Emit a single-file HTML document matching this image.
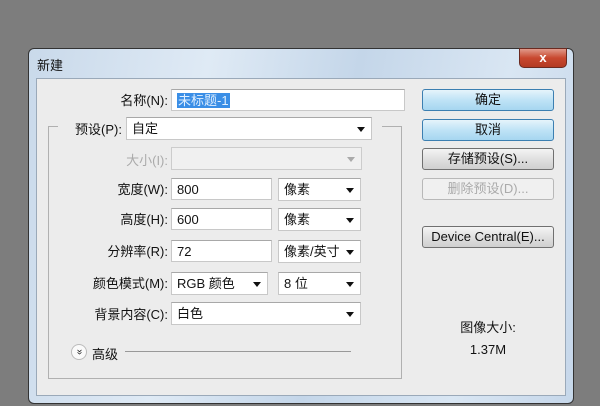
<!DOCTYPE html><html><head><meta charset="utf-8"><style>
*{margin:0;padding:0;box-sizing:border-box}
body{width:600px;height:406px;background:#7d7d7d;position:relative;overflow:hidden;font-family:"Liberation Sans","Noto Sans CJK SC",sans-serif;font-size:13px;color:#111}
.a{position:absolute}
.dlg{left:28px;top:48px;width:546px;height:356px;border-radius:6px;border:1px solid #333;background:linear-gradient(100deg,#c9d9ea 0%,#dfeaf5 30%,#c4d6e9 55%,#d9e6f3 80%,#c6d7ea 100%)}
.panel{left:36px;top:78px;width:530px;height:318px;background:#ececec;border:1px solid #9aa9b9}
.inp{background:#fff;border:1px solid #c8c8c8;border-top-color:#a8a8a8;padding-left:5px;line-height:21px}
.lbl{text-align:right;line-height:21px}
.arr{position:absolute;right:6px;top:9px;width:0;height:0;border-left:4px solid transparent;border-right:4px solid transparent;border-top:5px solid #111}
.btn{left:422px;width:132px;height:22px;border:1px solid #707070;border-radius:3px;background:linear-gradient(#f4f4f4,#e0e0e0 50%,#cfcfcf);text-align:center;line-height:20px}
.bl{border-color:#3c7fb1;background:linear-gradient(#e6f4fb,#bfe3f6 50%,#a6d6f0)}
</style></head><body>
<div class="a dlg"></div>
<div class="a" style="left:37px;top:55px;font-size:13px">新建</div>
<div class="a" style="left:519px;top:48px;width:48px;height:20px;border-radius:0 0 5px 5px;background:linear-gradient(#e09a8a,#c8482f 50%,#b33a22);border:1px solid #6b2a20;color:#fff;text-align:center;font-weight:bold;line-height:18px;font-size:13px">x</div>
<div class="a panel"></div>
<div class="a" style="left:48px;top:126px;width:354px;height:253px;border:1px solid #b0b0b0;border-top:none"></div>
<div class="a" style="left:48px;top:126px;width:10px;border-top:1px solid #b0b0b0"></div>
<div class="a" style="left:382px;top:126px;width:20px;border-top:1px solid #b0b0b0"></div>

<div class="a lbl" style="left:80px;top:90px;width:88px">名称(N):</div>
<div class="a inp" style="left:171px;top:89px;width:234px;height:22px"><span style="background:#3a8ee6;color:#dfefff;padding:0 1px">未标题-1</span></div>

<div class="a lbl" style="left:60px;top:119px;width:62px">预设(P):</div>
<div class="a inp" style="left:126px;top:117px;width:246px;height:23px">自定<i class="arr"></i></div>

<div class="a lbl" style="left:80px;top:150px;width:88px;color:#aaa">大小(I):</div>
<div class="a inp" style="left:171px;top:147px;width:191px;height:23px;background:#f0f0f0;border-color:#ccc"><i class="arr" style="border-top-color:#aaa"></i></div>

<div class="a lbl" style="left:80px;top:179px;width:88px">宽度(W):</div>
<div class="a inp" style="left:171px;top:178px;width:101px;height:22px">800</div>
<div class="a inp" style="left:278px;top:178px;width:83px;height:23px">像素<i class="arr"></i></div>

<div class="a lbl" style="left:80px;top:209px;width:88px">高度(H):</div>
<div class="a inp" style="left:171px;top:208px;width:101px;height:22px">600</div>
<div class="a inp" style="left:278px;top:208px;width:83px;height:23px">像素<i class="arr"></i></div>

<div class="a lbl" style="left:70px;top:241px;width:98px">分辨率(R):</div>
<div class="a inp" style="left:171px;top:240px;width:101px;height:22px">72</div>
<div class="a inp" style="left:278px;top:240px;width:83px;height:23px">像素/英寸<i class="arr"></i></div>

<div class="a lbl" style="left:60px;top:273px;width:108px">颜色模式(M):</div>
<div class="a inp" style="left:171px;top:272px;width:97px;height:23px">RGB 颜色<i class="arr"></i></div>
<div class="a inp" style="left:278px;top:272px;width:83px;height:23px">8 位<i class="arr"></i></div>

<div class="a lbl" style="left:60px;top:304px;width:108px">背景内容(C):</div>
<div class="a inp" style="left:171px;top:302px;width:190px;height:23px">白色<i class="arr"></i></div>

<div class="a" style="left:71px;top:344px;width:16px;height:16px;font-size:10px;text-align:center;line-height:14px;transform:rotate(90deg);background:#fafafa;border-radius:50%;border:1px solid #bbb">»</div>
<div class="a" style="left:92px;top:344px">高级</div>
<div class="a" style="left:125px;top:351px;width:226px;border-top:1px solid #999"></div>

<div class="a btn bl" style="top:89px">确定</div>
<div class="a btn bl" style="top:119px">取消</div>
<div class="a btn" style="top:148px">存储预设(S)...</div>
<div class="a btn" style="top:178px;color:#aaa;border-color:#b8b8b8;background:#f0f0f0">删除预设(D)...</div>
<div class="a btn" style="top:226px">Device Central(E)...</div>

<div class="a" style="left:440px;top:317px;width:96px;text-align:center">图像大小:</div>
<div class="a" style="left:440px;top:342px;width:96px;text-align:center">1.37M</div>
</body></html>
